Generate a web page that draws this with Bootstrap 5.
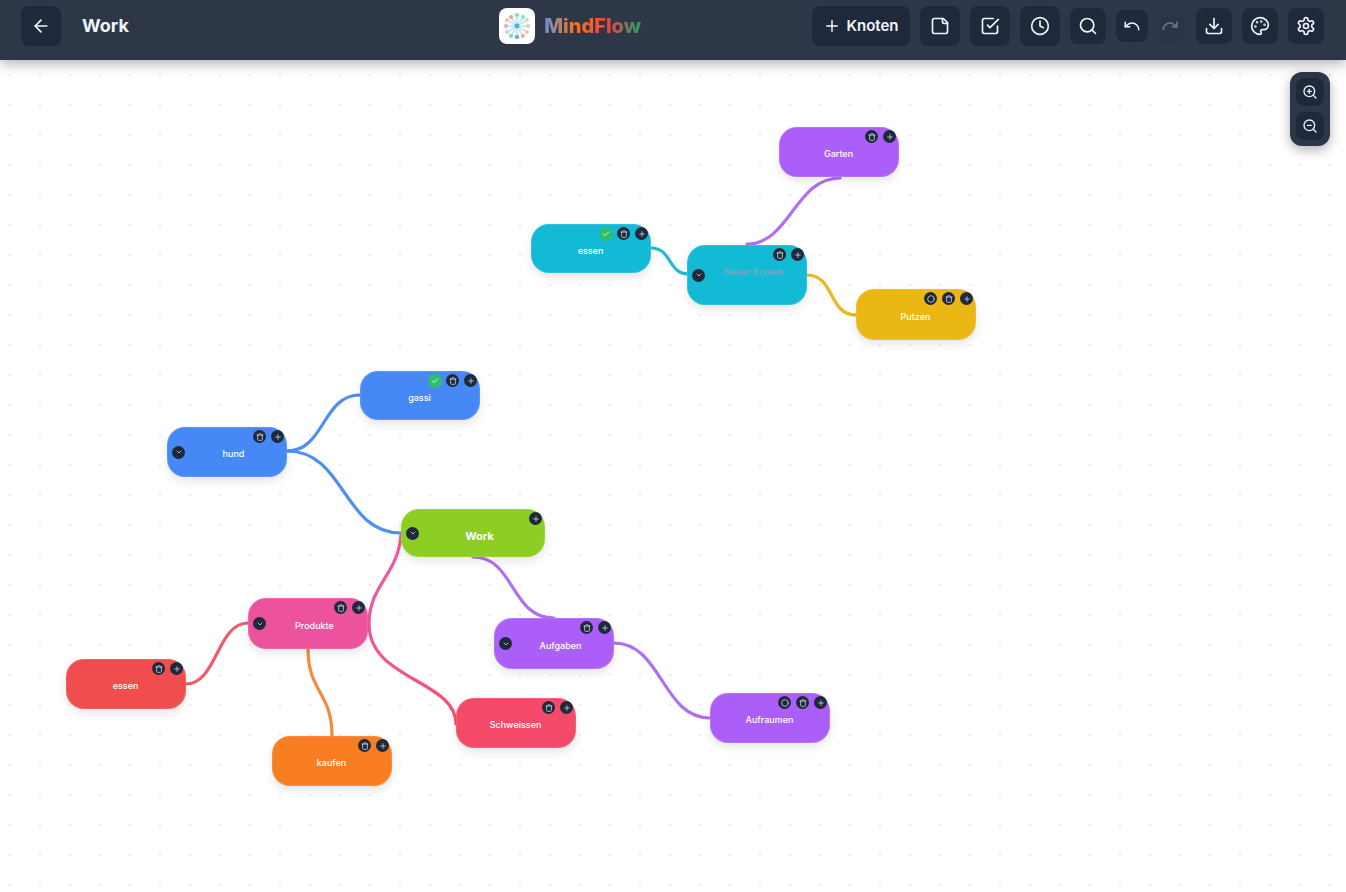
<!DOCTYPE html>
<html lang="de">

<head>
    <meta charset="UTF-8">
    <meta name="viewport" content="width=device-width, initial-scale=1.0">
    <title>MindFlow</title>
    <link href="https://cdn.jsdelivr.net/npm/bootstrap@5.3.3/dist/css/bootstrap.min.css" rel="stylesheet">
    <script src="https://cdn.jsdelivr.net/npm/bootstrap@5.3.3/dist/js/bootstrap.bundle.min.js"></script>
    <style>
        html, body { height: 100%; overflow: hidden; }
        body { font-family: Inter, "Liberation Sans", sans-serif; background: #fff; }
        .app-bar { height: 60px; background: #2d3748; padding: 0 22px 8px 21px; position: relative; z-index: 5; box-shadow: 0 4px 12px rgba(0,0,0,.3); }
        .tool-row { gap: 10px; }
        .history-row { gap: 6px; }
        .tool-btn { background: #1e293b; color: #f1f5f9; border: 0; border-radius: 8px; padding: 0; display: flex; align-items: center; justify-content: center; flex: none; }
        .tool-btn svg { fill: none; stroke: currentColor; stroke-width: 2; stroke-linecap: round; stroke-linejoin: round; }
        .size-40 { width: 40px; height: 40px; }
        .size-36 { width: 36px; height: 36px; }
        .size-32 { width: 32px; height: 32px; }
        .size-28 { width: 28px; height: 28px; }
        .tool-btn.off { opacity: .35; background: #2a3446; }
        .knoten-btn { width: 98px; height: 40px; font-size: 15px; font-weight: 600; gap: 5px; }
        .board-title { color: #f1f5f9; font-size: 18px; font-weight: 700; margin-left: 21px; line-height: 1; }
        .logo-box { width: 36px; height: 36px; background: #fff; border-radius: 8px; }
        .logo-text { font-size: 20px; font-weight: 800; line-height: 1; background: linear-gradient(90deg, #6f8fd8, #f97316 32%, #ef4444 66%, #22a06b); -webkit-background-clip: text; background-clip: text; color: transparent; }
        .logo-wrap { margin-right: 171px; gap: 9px; }
        .map-area { position: absolute; inset: 60px 0 0 0; overflow: hidden; background-image: radial-gradient(circle, #e9ebee 1px, transparent 1.2px); background-size: 30px 30px; background-position: -5px 0; }
        .edge-layer { position: absolute; left: 0; top: 0; width: 1346px; height: 832px; fill: none; stroke-width: 3.2; stroke-linecap: round; }
        .zoom-box { position: absolute; left: 1290px; top: 12px; width: 40px; height: 74px; background: #2d3748; border-radius: 12px; padding: 6px; gap: 6px; box-shadow: 0 4px 12px rgba(0,0,0,.3); }
        .map-node { position: absolute; color: #fff; border-radius: 18px; font-size: 9px; font-weight: 500; padding-top: 4px; padding-right: 1px; border: 1px solid rgba(255,255,255,.12); box-shadow: 0 4px 10px rgba(0,0,0,.1); display: flex; align-items: center; justify-content: center; }
        .map-node.has-kids { padding-left: 14px; }
        .map-node.root-node { font-size: 11px; font-weight: 700; padding-top: 7px; }
        .map-node.draft { color: rgba(148,163,184,.9); padding-top: 0; padding-bottom: 6px; }
        .node-tools { position: absolute; top: 2px; right: 2px; gap: 5px; }
        .node-dot { width: 13px; height: 13px; border-radius: 50%; background: #1e293b; color: #cbd5e1; display: flex; align-items: center; justify-content: center; }
        .node-dot svg { width: 8px; height: 8px; fill: none; stroke: currentColor; stroke-width: 2.4; stroke-linecap: round; stroke-linejoin: round; }
        .node-dot.done { background: #2fbf6c; color: #fff; width: 14px; height: 14px; margin: -.5px -.5px; }
        .node-fold { position: absolute; left: 4px; top: 50%; margin-top: -6.5px; }
        .icon-sheet { position: absolute; width: 0; height: 0; }
    </style>
</head>

<body>
    <svg class="icon-sheet">
        <symbol id="i-back" viewBox="0 0 24 24"><path d="m12 19-7-7 7-7"/><path d="M19 12H5"/></symbol>
        <symbol id="i-plus" viewBox="0 0 24 24"><path d="M5 12h14"/><path d="M12 5v14"/></symbol>
        <symbol id="i-note" viewBox="0 0 24 24"><path d="M16 3H5a2 2 0 0 0-2 2v14a2 2 0 0 0 2 2h14a2 2 0 0 0 2-2V8Z"/><path d="M15 3v4a2 2 0 0 0 2 2h4"/></symbol>
        <symbol id="i-check" viewBox="0 0 24 24"><path d="m9 11 3 3L22 4"/><path d="M21 12v7a2 2 0 0 1-2 2H5a2 2 0 0 1-2-2V5a2 2 0 0 1 2-2h11"/></symbol>
        <symbol id="i-clock" viewBox="0 0 24 24"><circle cx="12" cy="12" r="10"/><path d="M12 6v6l4 2"/></symbol>
        <symbol id="i-search" viewBox="0 0 24 24"><circle cx="11" cy="11" r="8"/><path d="m21 21-4.3-4.3"/></symbol>
        <symbol id="i-undo" viewBox="0 0 24 24"><path d="M3 7v6h6"/><path d="M21 17a9 9 0 0 0-9-9 9 9 0 0 0-6 2.3L3 13"/></symbol>
        <symbol id="i-redo" viewBox="0 0 24 24"><path d="M21 7v6h-6"/><path d="M3 17a9 9 0 0 1 9-9 9 9 0 0 1 6 2.3l3 2.7"/></symbol>
        <symbol id="i-save" viewBox="0 0 24 24"><path d="M21 15v4a2 2 0 0 1-2 2H5a2 2 0 0 1-2-2v-4"/><path d="m7 10 5 5 5-5"/><path d="M12 15V3"/></symbol>
        <symbol id="i-palette" viewBox="0 0 24 24"><circle cx="13.5" cy="6.5" r=".5"/><circle cx="17.5" cy="10.5" r=".5"/><circle cx="8.5" cy="7.5" r=".5"/><circle cx="6.5" cy="12.5" r=".5"/><path d="M12 2C6.5 2 2 6.5 2 12s4.5 10 10 10c.926 0 1.648-.746 1.648-1.688 0-.437-.18-.835-.437-1.125-.29-.289-.438-.652-.438-1.125a1.64 1.64 0 0 1 1.668-1.668h1.996c3.051 0 5.555-2.503 5.555-5.554C21.965 6.012 17.461 2 12 2z"/></symbol>
        <symbol id="i-gear" viewBox="0 0 24 24"><path d="M12.22 2h-.44a2 2 0 0 0-2 2v.18a2 2 0 0 1-1 1.73l-.43.25a2 2 0 0 1-2 0l-.15-.08a2 2 0 0 0-2.73.73l-.22.38a2 2 0 0 0 .73 2.73l.15.1a2 2 0 0 1 1 1.72v.51a2 2 0 0 1-1 1.74l-.15.09a2 2 0 0 0-.73 2.73l.22.38a2 2 0 0 0 2.73.73l.15-.08a2 2 0 0 1 2 0l.43.25a2 2 0 0 1 1 1.73V20a2 2 0 0 0 2 2h.44a2 2 0 0 0 2-2v-.18a2 2 0 0 1 1-1.73l.43-.25a2 2 0 0 1 2 0l.15.08a2 2 0 0 0 2.73-.73l.22-.39a2 2 0 0 0-.73-2.73l-.15-.08a2 2 0 0 1-1-1.74v-.5a2 2 0 0 1 1-1.74l.15-.09a2 2 0 0 0 .73-2.73l-.22-.38a2 2 0 0 0-2.73-.73l-.15.08a2 2 0 0 1-2 0l-.43-.25a2 2 0 0 1-1-1.73V4a2 2 0 0 0-2-2z"/><circle cx="12" cy="12" r="3"/></symbol>
        <symbol id="i-zoomin" viewBox="0 0 24 24"><circle cx="11" cy="11" r="8"/><path d="m21 21-4.3-4.3"/><path d="M11 8v6"/><path d="M8 11h6"/></symbol>
        <symbol id="i-zoomout" viewBox="0 0 24 24"><circle cx="11" cy="11" r="8"/><path d="m21 21-4.3-4.3"/><path d="M8 11h6"/></symbol>
        <symbol id="i-trash" viewBox="0 0 24 24"><path d="M3 6h18"/><path d="M19 6v14c0 1-1 2-2 2H7c-1 0-2-1-2-2V6"/><path d="M8 6V4c0-1 1-2 2-2h4c1 0 2 1 2 2v2"/></symbol>
        <symbol id="i-tick" viewBox="0 0 24 24"><path d="M20 6 9 17l-5-5"/></symbol>
        <symbol id="i-ring" viewBox="0 0 24 24"><circle cx="12" cy="12" r="10"/></symbol>
        <symbol id="i-down" viewBox="0 0 24 24"><path d="m6 9 6 6 6-6"/></symbol>
    </svg>

    <header class="app-bar d-flex align-items-center">
        <div class="d-flex align-items-center flex-grow-1">
            <button class="tool-btn size-40"><svg width="20" height="20"><use href="#i-back"/></svg></button>
            <span class="board-title">Work</span>
        </div>
        <div class="logo-wrap d-flex align-items-center">
            <div class="logo-box d-flex align-items-center justify-content-center">
                <svg width="30" height="30" viewBox="0 0 30 30" fill="none" stroke-width=".9">
                    <circle cx="15" cy="15" r="13" fill="#f3f8f8"/>
                    <g stroke="#9ad8e6">
                        <path d="M15 15 15 4M15 15 21 6M15 15 25 9M15 15 26 15M15 15 25 21M15 15 21 25M15 15 15 26M15 15 9 25M15 15 5 21M15 15 4 15M15 15 5 9M15 15 9 6"/>
                    </g>
                    <circle cx="15" cy="15" r="2.4" fill="#4fb3d9"/>
                    <circle cx="15" cy="4" r="2" fill="#7fdcc0"/>
                    <circle cx="21" cy="6" r="2" fill="#8ee0c8"/>
                    <circle cx="25" cy="9" r="1.8" fill="#b9e3c2"/>
                    <circle cx="26" cy="15" r="2" fill="#f7c59f"/>
                    <circle cx="25" cy="21" r="1.8" fill="#f7b9a0"/>
                    <circle cx="21" cy="25" r="2" fill="#f4a6a0"/>
                    <circle cx="15" cy="26" r="2.2" fill="#5bb8e0"/>
                    <circle cx="9" cy="25" r="2" fill="#8fd3a8"/>
                    <circle cx="5" cy="21" r="1.8" fill="#a7dcc0"/>
                    <circle cx="4" cy="15" r="2" fill="#f2a6b3"/>
                    <circle cx="5" cy="9" r="1.8" fill="#f5b0a0"/>
                    <circle cx="9" cy="6" r="2" fill="#f5a58f"/>
                </svg>
            </div>
            <span class="logo-text">MindFlow</span>
        </div>
        <div class="tool-row d-flex align-items-center">
            <button class="tool-btn knoten-btn"><svg width="18" height="18"><use href="#i-plus"/></svg>Knoten</button>
            <button class="tool-btn size-40"><svg width="20" height="20"><use href="#i-note"/></svg></button>
            <button class="tool-btn size-40"><svg width="20" height="20"><use href="#i-check"/></svg></button>
            <button class="tool-btn size-40"><svg width="20" height="20"><use href="#i-clock"/></svg></button>
            <button class="tool-btn size-36"><svg width="20" height="20"><use href="#i-search"/></svg></button>
            <div class="history-row d-flex">
                <button class="tool-btn size-32"><svg width="18" height="18"><use href="#i-undo"/></svg></button>
                <button class="tool-btn size-32 off"><svg width="18" height="18"><use href="#i-redo"/></svg></button>
            </div>
            <button class="tool-btn size-36"><svg width="20" height="20"><use href="#i-save"/></svg></button>
            <button class="tool-btn size-36"><svg width="20" height="20"><use href="#i-palette"/></svg></button>
            <button class="tool-btn size-36"><svg width="20" height="20"><use href="#i-gear"/></svg></button>
        </div>
    </header>

    <main class="map-area" id="map">
        <div class="zoom-box d-flex flex-column">
            <button class="tool-btn size-28"><svg width="16" height="16"><use href="#i-zoomin"/></svg></button>
            <button class="tool-btn size-28"><svg width="16" height="16"><use href="#i-zoomout"/></svg></button>
        </div>
    </main>

    <script>
        const map = document.getElementById('map');

        // [path in page coordinates, colour]
        const edges = [
            ['M651 248C672 248 668 274 688 274', '#22b8d6'],
            ['M747 244C790 244 795 178 840 178', '#b26ff0'],
            ['M807 275C835 275 828 315 856 315', '#e8b923'],
            ['M287 451C325 451 322 395 360 395', '#4f8ff0'],
            ['M287 451C345 451 343 533 401 533', '#4f8ff0'],
            ['M401 535C398 575 369 585 369 624', '#ec5a9e'],
            ['M369 624C369 680 456 680 456 724', 'url(#rose)'],
            ['M473 557C515 557 510 618 554 618', '#b26ff0'],
            ['M614 643C662 643 662 718 710 718', '#b26ff0'],
            ['M248 623C217 623 217 684 186 684', '#ea5f6a'],
            ['M308 649C308 692 332 692 332 736', '#f28b3c']
        ];

        const nodes = [
            { text: 'Garten', x: 779, y: 127, w: 120, h: 50, color: '#ac5ff8' },
            { text: 'essen', x: 531, y: 224, w: 120, h: 49, color: '#12bad6', state: 'done' },
            { text: 'Neuer Knoten', x: 687, y: 245, w: 120, h: 60, color: '#12bad6', kids: true, draft: true },
            { text: 'Putzen', x: 856, y: 289, w: 120, h: 51, color: '#ebb714', state: 'open' },
            { text: 'gassi', x: 360, y: 371, w: 120, h: 49, color: '#4588f6', state: 'done' },
            { text: 'hund', x: 167, y: 427, w: 120, h: 50, color: '#4588f6', kids: true },
            { text: 'Work', x: 401, y: 509, w: 144, h: 48, color: '#8cce21', kids: true, root: true },
            { text: 'Produkte', x: 248, y: 598, w: 120, h: 51, color: '#ed529f', kids: true },
            { text: 'Aufgaben', x: 494, y: 618, w: 120, h: 51, color: '#ac5ff8', kids: true },
            { text: 'essen', x: 66, y: 659, w: 120, h: 50, color: '#f04e4e' },
            { text: 'Schweissen', x: 456, y: 698, w: 120, h: 50, color: '#f44968' },
            { text: 'kaufen', x: 272, y: 736, w: 120, h: 50, color: '#f97d21' },
            { text: 'Aufraumen', x: 710, y: 693, w: 120, h: 50, color: '#ac5ff8', state: 'open' }
        ];

        const svgNS = 'http://www.w3.org/2000/svg';
        const edgeLayer = document.createElementNS(svgNS, 'svg');
        edgeLayer.setAttribute('class', 'edge-layer');
        edgeLayer.setAttribute('viewBox', '0 60 1346 832');
        edgeLayer.innerHTML = `<defs><linearGradient id="rose" gradientUnits="userSpaceOnUse" x1="369" y1="624" x2="456" y2="724"><stop offset="0" stop-color="#ec5a9e"/><stop offset="1" stop-color="#f4506e"/></linearGradient></defs>`
            + edges.map(e => `<path d="${e[0]}" stroke="${e[1]}"/>`).join('');
        map.prepend(edgeLayer);

        function dot(icon, extra) {
            return `<span class="node-dot ${extra || ''}"><svg><use href="#${icon}"/></svg></span>`;
        }

        nodes.forEach(node => {
            const el = document.createElement('div');
            el.className = 'map-node' + (node.kids ? ' has-kids' : '') + (node.root ? ' root-node' : '') + (node.draft ? ' draft' : '');
            el.style.cssText = `left:${node.x}px;top:${node.y - 60}px;width:${node.w}px;height:${node.h}px;background:${node.color}`;
            let tools = '';
            if (node.state === 'done') tools += dot('i-tick', 'done');
            if (node.state === 'open') tools += dot('i-ring');
            if (!node.root) tools += dot('i-trash');
            tools += dot('i-plus');
            el.innerHTML = `
                ${node.kids ? `<span class="node-fold">${dot('i-down')}</span>` : ''}
                <span>${node.text}</span>
                <span class="node-tools d-flex">${tools}</span>
            `;
            map.appendChild(el);
        });
    </script>
</body>

</html>
